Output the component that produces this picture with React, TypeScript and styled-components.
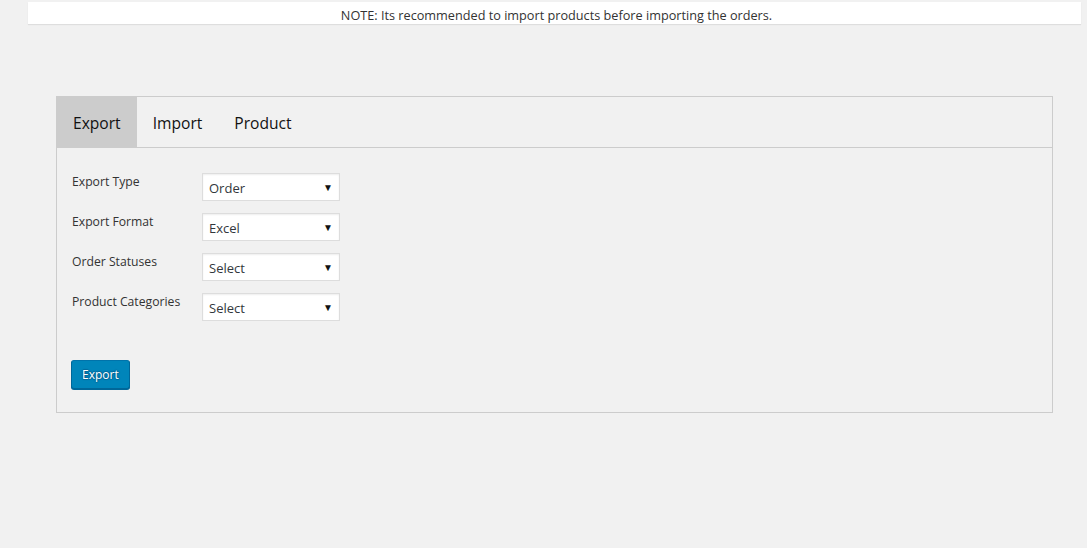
import React from "react";
import styled, { createGlobalStyle } from "styled-components";

const Global = createGlobalStyle`
  html, body { margin: 0; padding: 0; background: #f1f1f1; }
  body { font-family: "Open Sans", "Noto Sans", sans-serif; color: #444; font-size: 13px; }
`;

const Page = styled.div`
  padding: 2px 6px 0 28px;
`;

const Notice = styled.div`
  background: #fff;
  box-shadow: 0 1px 1px rgba(0, 0, 0, 0.08);
  height: 22px;
  line-height: 26px;
  text-align: center;
  font-size: 12.7px;
  color: #333;
  padding-left: 4px;
`;

const Panel = styled.div`
  margin: 72px 34px 0 56px;
  border: 1px solid #ccc;
  background: #f1f1f1;
`;

const TabBar = styled.div`
  display: flex;
  height: 50px;
  border-bottom: 1px solid #ccc;
`;

const Tab = styled.div<{ $active?: boolean }>`
  padding: 2px 16px 0;
  display: flex;
  align-items: center;
  font-size: 15.6px;
  color: #111;
  background: ${(p) => (p.$active ? "#ccc" : "transparent")};
`;

const Body = styled.div`
  padding: 25px 15px 23px 15px;
`;

const Form = styled.div`
  display: grid;
  grid-template-columns: 130px 138px;
  row-gap: 12px;
`;

const Label = styled.div`
  font-size: 12.2px;
  color: #333;
  padding-top: 1px;
  line-height: 16px;
`;

const SelectBox = styled.div`
  height: 28px;
  box-sizing: border-box;
  border: 1px solid #ddd;
  background: #fff;
  box-shadow: inset 0 1px 2px rgba(0, 0, 0, 0.07);
  display: flex;
  align-items: center;
  justify-content: space-between;
  padding: 2px 6px 0 6px;
  font-size: 13px;
  color: #32373c;
`;

const Arrow = styled.span`
  font-size: 10px;
  color: #111;
  margin-top: -3px;
`;

const Button = styled.button`
  margin-top: 39px;
  height: 29px;
  padding: 0 10px 1px;
  background: #0085ba;
  border: 1px solid;
  border-color: #0073aa #006799 #006799;
  border-radius: 3px;
  box-shadow: 0 1px 0 #006799;
  color: #fff;
  font-family: inherit;
  font-size: 12px;
  text-shadow: 0 -1px 1px #006799, 1px 0 1px #006799, 0 1px 1px #006799, -1px 0 1px #006799;
  margin-left: -1px;
`;

const fields = [
  { label: "Export Type", value: "Order" },
  { label: "Export Format", value: "Excel" },
  { label: "Order Statuses", value: "Select" },
  { label: "Product Categories", value: "Select" },
];

export default function App() {
  return (
    <>
      <Global />
      <Page>
        <Notice>NOTE: Its recommended to import products before importing the orders.</Notice>
      </Page>
      <Panel>
        <TabBar>
          <Tab $active>Export</Tab>
          <Tab>Import</Tab>
          <Tab>Product</Tab>
        </TabBar>
        <Body>
          <Form>
            {fields.map((f) => (
              <React.Fragment key={f.label}>
                <Label>{f.label}</Label>
                <SelectBox>
                  <span>{f.value}</span>
                  <Arrow>▼</Arrow>
                </SelectBox>
              </React.Fragment>
            ))}
          </Form>
          <Button>Export</Button>
        </Body>
      </Panel>
    </>
  );
}
